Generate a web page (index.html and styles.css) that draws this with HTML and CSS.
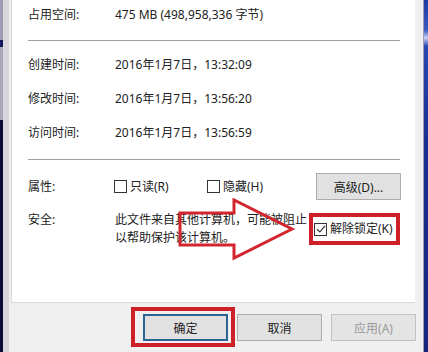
FILE: index.html
```html
<!DOCTYPE html>
<html lang="zh-CN">
<head>
    <meta charset="UTF-8">
    <meta name="viewport" content="width=device-width, initial-scale=1.0">
    <title>属性</title>
    <link rel="stylesheet" href="styles.css">
</head>
<body>
    <div class="screen">
        <div class="edge-left"></div>
        <div class="dialog">
            <div class="panel">
                <div class="row">
                    <span class="label">占用空间:</span>
                    <span class="value">475 MB (498,958,336 字节)</span>
                </div>
                <div class="sep sep-first"></div>
                <div class="row row-time">
                    <span class="label">创建时间:</span>
                    <span class="value">2016年1月7日，13:32:09</span>
                </div>
                <div class="row row-time">
                    <span class="label">修改时间:</span>
                    <span class="value">2016年1月7日，13:56:20</span>
                </div>
                <div class="row row-time">
                    <span class="label">访问时间:</span>
                    <span class="value">2016年1月7日，13:56:59</span>
                </div>
                <div class="sep sep-second"></div>
                <div class="row row-attr">
                    <span class="label">属性:</span>
                    <label class="check check-readonly"><span class="box"></span>只读(R)</label>
                    <label class="check"><span class="box"></span>隐藏(H)</label>
                    <button class="btn btn-advanced">高级(D)...</button>
                </div>
                <div class="row row-security">
                    <span class="label">安全:</span>
                    <span class="security-text">此文件来自其他计算机，可能被阻止以帮助保护该计算机。</span>
                    <label class="check check-unblock">
                        <span class="box">
                            <svg width="10" height="10" viewBox="0 0 10 10"><path d="M1 5.2 L3.8 8 L9 1.8" fill="none" stroke="#222" stroke-width="1.1"/></svg>
                        </span>解除锁定(K)
                    </label>
                </div>

                <!-- red arrow drawn over the text -->
                <svg class="arrow" width="120" height="64" viewBox="0 0 120 64">
                    <polygon points="2,15 56,15 56,2 114,31 56,60 56,47 2,47" fill="none" stroke="#d3252d" stroke-width="3"/>
                </svg>
            </div>
            <div class="buttons">
                <div class="mark">
                    <button class="btn btn-default">确定</button>
                </div>
                <button class="btn">取消</button>
                <button class="btn btn-disabled">应用(A)</button>
            </div>
        </div>
        <div class="edge-right"></div>
    </div>
</body>
</html>
```

FILE: styles.css
```css
body {
    margin: 0;
    padding: 0;
    font-family: "Noto Sans", "Noto Sans CJK SC", sans-serif;
    font-size: 12px;
    color: #222;
    background-color: #f0f0f0;
}

.screen {
    display: flex;
    width: 428px;
    height: 352px;
    overflow: hidden;
}

.edge-left {
    width: 3px;
    background: linear-gradient(to bottom, #9c9cb4 0, #9c9cb4 40px, #141a5a 40px, #141a5a 47px, #a8a8bc 47px, #a8a8bc 120px, #0c0c36 120px);
    border-right: 6px solid #d6d6dc;
}

.edge-right {
    width: 4px;
    border-left: 1px solid #9aa0b8;
    background: linear-gradient(to bottom, #1c3aa0 0, #3a5ac0 30px, #c8d0f0 38px, #2a48b0 46px, #1a2f92 140px, #14257a 100%);
}

.dialog {
    flex: 1;
    display: flex;
    flex-direction: column;
    padding-left: 2px;
    background-color: #f0f0f0;
}

.panel {
    position: relative;
    width: 373px;
    height: 297px;
    padding: 5px 14px 0 16px;
    background-color: #fff;
    border-left: 1px solid #dadada;
    border-bottom: 1px solid #dadada;
}

.row {
    display: flex;
    align-items: center;
    height: 20px;
    line-height: 20px;
}

.label {
    width: 87px;
    flex-shrink: 0;
}

.sep {
    height: 1px;
    margin-right: 1px;
    background-color: #a0a0a0;
}

.sep-first {
    margin-top: 15px;
    margin-bottom: 14px;
}

.sep-second {
    margin-top: 16px;
    margin-bottom: 13px;
}

.row-time + .row-time {
    margin-top: 14px;
}

.row-attr {
    height: 27px;
}

.check {
    display: flex;
    align-items: center;
    gap: 3px;
    white-space: nowrap;
}

.check-readonly {
    width: 93px;
    margin-left: -1px;
}

.box {
    display: flex;
    align-items: center;
    justify-content: center;
    width: 11px;
    height: 11px;
    border: 1px solid #333;
    background-color: #fff;
}

.btn {
    width: 85px;
    height: 27px;
    padding: 0;
    font-family: inherit;
    font-size: 12px;
    color: #222;
    background-color: #e1e1e1;
    border: 1px solid #adadad;
}

.btn-advanced {
    margin-left: auto;
}

.row-security {
    align-items: flex-start;
    height: auto;
    margin-top: 11px;
    line-height: 18px;
}

.security-text {
    width: 194px;
    flex-shrink: 0;
}

.check-unblock {
    margin-top: 2px;
    height: 24px;
    padding: 0 3px 0 1px;
    border: 4px solid #cf2029;
}

.arrow {
    position: absolute;
    left: 166px;
    top: 198px;
}

.buttons {
    display: flex;
    justify-content: flex-end;
    gap: 9px;
    margin-top: 11px;
    padding-right: 7px;
}

.mark {
    margin: -7px -7px -6px -12px;
    padding: 3px 3px 2px 8px;
    border: 4px solid #cf2029;
}

.btn-default {
    display: block;
    border: 2px solid #2c6494;
}

.btn-disabled {
    color: #9a9a9a;
    background-color: #e4e4e4;
    border-color: #c2c2c2;
}
```
